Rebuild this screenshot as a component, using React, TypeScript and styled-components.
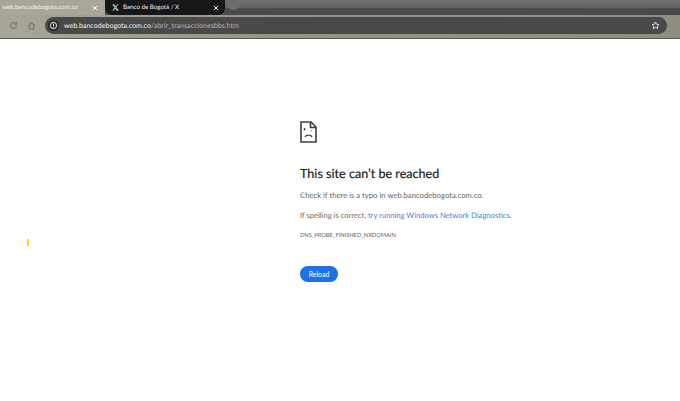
import React from "react";
import styled, { createGlobalStyle } from "styled-components";

const Global = createGlobalStyle`
  html, body { margin: 0; padding: 0; background: #fff; }
  body { font-family: Lato, "Open Sans", sans-serif; text-rendering: geometricPrecision; }
  * { box-sizing: border-box; }
`;

const Page = styled.div`
  position: relative;
  width: 680px;
  height: 401px;
  overflow: hidden;
  display: flex;
  flex-direction: column;
  background: #fff;
`;

const TabStrip = styled.div`
  height: 15px;
  display: flex;
  align-items: stretch;
  background: linear-gradient(#6f6f6f, #626262 50%, #4b4b4b 55%, #494949);
`;

const Tab = styled.div<{ $active?: boolean }>`
  display: flex;
  align-items: center;
  height: 15px;
  font-size: 6.2px;
  white-space: nowrap;
  ${(p) =>
    p.$active
      ? `width: 105px; padding: 0 7px 0 2px; color: #f6f4ee; background: linear-gradient(90deg, #a9a598, #aaa69a);`
      : `width: 120px; padding: 0 6px 0 7px; color: #f0f0f0; background: #17171a; border-radius: 0 0 7px 7px;`}
`;

const TabTitle = styled.span`
  flex: 1;
`;

const Close = styled.svg`
  width: 6px;
  height: 6px;
  flex: none;
`;

const XLogo = styled.svg`
  width: 7px;
  height: 7px;
  margin-right: 4px;
  flex: none;
`;

const NewTab = styled.div`
  width: 13px;
  height: 13px;
  margin-left: 2px;
  border-radius: 50%;
  background: #6d6d6d;
  transform: translateY(-3px);
`;

const Toolbar = styled.div`
  height: 24px;
  display: flex;
  align-items: center;
  padding: 0 13px 2px 0;
  background: linear-gradient(90deg, #a8a599, #96938a 40%, #8f8c82);
  border-bottom: 1px solid #5b5a55;
`;

const NavIcon = styled.svg`
  width: 9px;
  height: 9px;
  flex: none;
  margin-left: 9px;
`;

const Omnibox = styled.div`
  flex: 1;
  height: 17px;
  margin-left: 9px;
  display: flex;
  align-items: center;
  padding: 0 7px 0 3px;
  border-radius: 9px;
  background: #49494a;
  font-size: 7.1px;
`;

const InfoBadge = styled.svg`
  width: 11px;
  height: 11px;
  flex: none;
  margin: 0 5px 0 0;
`;

const Host = styled.span`
  color: #f0f0f0;
`;

const Path = styled.span`
  flex: 1;
  color: #b4b4b4;
`;

const Star = styled.svg`
  width: 9px;
  height: 9px;
  flex: none;
`;

const Content = styled.main`
  flex: 1;
  padding: 82px 0 0 300px;
`;

const SadPage = styled.svg`
  display: block;
  width: 17px;
  height: 22px;
`;

const Heading = styled.h1`
  margin: 22px 0 0;
  font-size: 12.6px;
  line-height: 18px;
  font-weight: 400;
  color: #202124;
  -webkit-text-stroke: 0.2px #202124;
`;

const Line = styled.p`
  margin: 7px 0 0;
  font-size: 7.7px;
  line-height: 11px;
  color: #5f6368;
  white-space: nowrap;
`;

const Hint = styled(Line)`
  margin-top: 9px;
  font-size: 7.6px;
  color: #7b6a5f;
`;

const Link = styled.span`
  color: #3f7fdc;
`;

const Code = styled.div`
  margin-top: 10px;
  font-size: 5.7px;
  line-height: 9px;
  color: #5f6368;
`;

const Reload = styled.button`
  display: block;
  margin-top: 26px;
  width: 38px;
  height: 16px;
  padding: 0;
  border: 0;
  border-radius: 8px;
  background: #1a73e8;
  color: #fff;
  font-family: inherit;
  font-size: 6.9px;
  font-weight: 400;
`;

const Marker = styled.div`
  position: absolute;
  left: 27px;
  top: 239px;
  width: 2px;
  height: 7px;
  background: #f7e017;
`;

export default function App() {
  return (
    <Page>
      <Global />
      <TabStrip>
        <Tab $active>
          <TabTitle>web.bancodebogota.com.co</TabTitle>
          <Close viewBox="0 0 6 6"><path d="M1 1l4 4M5 1L1 5" stroke="#fff" strokeWidth="1" /></Close>
        </Tab>
        <Tab>
          <XLogo viewBox="0 0 24 24"><path fill="#fff" d="M18.2 2h3.400l-7.400 8.500L23 22h-6.800l-5.300-7-6.100 7H1.400l7.900-9.100L1 2h7l4.800 6.400zM17 20h1.900L7 3.900H5z" /></XLogo>
          <TabTitle>Banco de Bogotá / X</TabTitle>
          <Close viewBox="0 0 6 6"><path d="M1 1l4 4M5 1L1 5" stroke="#fff" strokeWidth="1" /></Close>
        </Tab>
        <NewTab />
      </TabStrip>
      <Toolbar>
        <NavIcon viewBox="0 0 12 12"><path d="M10 6a4 4 0 1 1-1.200-2.900M10 1v3H7" fill="none" stroke="#77766f" strokeWidth="1.500" /></NavIcon>
        <NavIcon viewBox="0 0 12 12"><path d="M2 6l4-4 4 4M3 5.500V10.500h6V5.500" fill="none" stroke="#77766f" strokeWidth="1.500" /></NavIcon>
        <Omnibox>
          <InfoBadge viewBox="0 0 12 12">
            <circle cx="6" cy="6" r="6" fill="#2a2a2b" />
            <circle cx="6" cy="6" r="3.400" fill="none" stroke="#fff" strokeWidth="1" />
            <path d="M6 3.800v2.600M6 7.200v1" stroke="#fff" strokeWidth="1" />
          </InfoBadge>
          <Host>web.bancodebogota.com.co</Host>
          <Path>/abrir_transaccionesbbs.htm</Path>
          <Star viewBox="0 0 12 12"><path d="M6 1.300l1.400 3 3.300.4-2.400 2.200.6 3.300L6 8.600l-2.900 1.600.6-3.300-2.400-2.200 3.300-.4z" fill="none" stroke="#eee" strokeWidth="1.200" /></Star>
        </Omnibox>
      </Toolbar>
      <Content>
        <SadPage viewBox="0 0 17 22">
          <path d="M1 1h10l5 5v15H1zM10.500 1v5.500H16" fill="none" stroke="#3c4043" strokeWidth="1.600" />
          <path d="M4.500 7v2.500M11.500 9v.5M5 16c1-2.500 6-2.500 7 0" fill="none" stroke="#3c4043" strokeWidth="1.400" />
        </SadPage>
        <Heading>This site can’t be reached</Heading>
        <Line>Check if there is a typo in web.bancodebogota.com.co.</Line>
        <Hint>If spelling is correct, <Link>try running Windows Network Diagnostics</Link>.</Hint>
        <Code>DNS_PROBE_FINISHED_NXDOMAIN</Code>
        <Reload>Reload</Reload>
      </Content>
      <Marker />
    </Page>
  );
}
